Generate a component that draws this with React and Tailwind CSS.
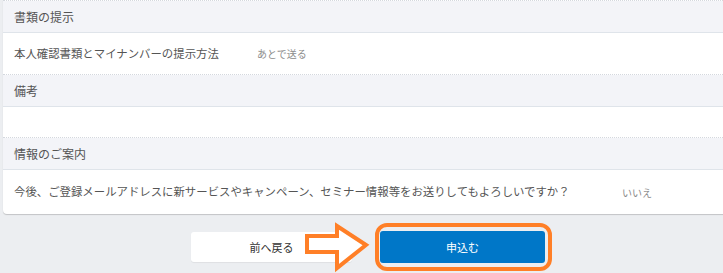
import React from "react";

const FONT = { fontFamily: '"Noto Sans CJK JP", "Noto Sans", sans-serif' };

function Header({ children }) {
  return (
    <div className="h-[32px] flex items-center pl-[11px] bg-[#f3f4f8] border-b border-[#dfe4ea] text-[12px] text-[#555]">
      {children}
    </div>
  );
}

function Row({ label, value, labelWidth, height, last }) {
  return (
    <div
      className={`flex items-center pl-[11px] ${height} ${
        last ? "" : "border-b border-dotted border-[#d4d8de]"
      }`}
    >
      <div className={`${labelWidth} shrink-0 text-[11.4px] text-[#555]`}>{label}</div>
      <div className="text-[10px] text-[#8c8c8c]">{value}</div>
    </div>
  );
}

export default function App() {
  return (
    <div
      className="relative w-[723px] h-[273px] overflow-hidden bg-[#eceef1]"
      style={FONT}
    >
      {/* カード */}
      <div className="ml-[3px] w-[760px] bg-white rounded-bl-[4px] border-t border-dotted border-[#d4d8de] shadow-[0_1px_1px_rgba(0,0,0,0.18)]">
        <Header>書類の提示</Header>
        <Row
          label="本人確認書類とマイナンバーの提示方法"
          value="あとで送る"
          labelWidth="w-[243px]"
          height="h-[42px]"
        />
        <Header>備考</Header>
        <Row label="" value="" labelWidth="w-[243px]" height="h-[31px]" />
        <Header>情報のご案内</Header>
        <Row
          label="今後、ご登録メールアドレスに新サービスやキャンペーン、セミナー情報等をお送りしてもよろしいですか？"
          value="いいえ"
          labelWidth="w-[608px]"
          height="h-[44px]"
          last
        />
      </div>

      {/* ボタン */}
      <div className="flex items-center gap-[28px] pl-[191px] pt-[17px]">
        <button className="w-[161px] h-[30px] bg-white rounded-[3px] text-[11px] text-[#333] shadow-[0_1px_1px_rgba(0,0,0,0.06)]">
          前へ戻る
        </button>
        <div className="relative">
          <span className="absolute -left-[5px] -top-[8px] -right-[7px] -bottom-[8px] border-[4px] border-[#ff7f27] rounded-[12px]" />
          <button className="relative block w-[165px] h-[32px] bg-[#0077c8] rounded-[3px] text-[11px] text-white">
            申込む
          </button>
        </div>
      </div>

      {/* 注釈の矢印 */}
      <svg
        className="absolute left-0 top-0 pointer-events-none"
        width="723"
        height="273"
        viewBox="0 0 723 273"
      >
        <path
          d="M307 236 H337 V226 L366 245 L337 268 V252 H307 Z"
          fill="#ffffff"
          stroke="#ff7f27"
          strokeWidth="4"
          strokeLinejoin="miter"
        />
      </svg>
    </div>
  );
}
